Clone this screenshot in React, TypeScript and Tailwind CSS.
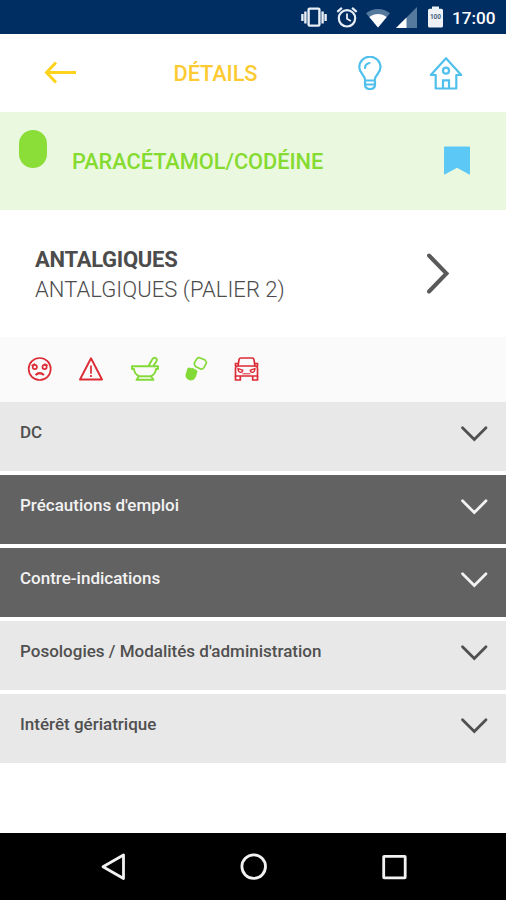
const sections = [
    { title: "DC", dark: false },
    { title: "Précautions d'emploi", dark: true },
    { title: "Contre-indications", dark: true },
    { title: "Posologies / Modalités d'administration", dark: false },
    { title: "Intérêt gériatrique", dark: false },
];

function StatusBar() {
    return (
        <div className="flex h-[34px] items-start justify-end bg-[#002d62] pr-[11px] pt-[6px] text-white">
            <svg className="h-[22px] w-[26px]" viewBox="0 0 26 22" fill="none" stroke="#e8eef5" strokeWidth="2.4">
                <rect x="7.6" y="2.6" width="10.8" height="17" rx="1" />
                <path d="M4.4 5.5v12M1.4 8v7M21.6 5.5v12M24.6 8v7" />
            </svg>
            <svg className="ml-[9px] h-[22px] w-[22px]" viewBox="0 0 22 22" fill="none" stroke="#e8eef5" strokeWidth="2.2">
                <circle cx="11" cy="12.3" r="8.2" />
                <path d="M11 7.5v5.3l3.8 2.3" strokeWidth="1.8" />
                <path d="M1.3 5.8l4.6-4M20.7 5.8l-4.6-4" />
            </svg>
            <svg className="ml-[8px] h-[22px] w-[24px]" viewBox="0 0 24 22">
                <path d="M0 7.3C7 1.6 17 1.6 24 7.3L12 21.5Z" fill="#56799e" />
                <path d="M3.3 11.1C8.5 7 15.5 7 20.7 11.1L12 21.5Z" fill="#fff" />
            </svg>
            <svg className="ml-[6px] h-[22px] w-[21px]" viewBox="0 0 21 22">
                <path d="M21 1v21H0Z" fill="#56799e" />
                <path d="M10.5 11.5V22H0Z" fill="#fff" />
            </svg>
            <svg className="ml-[11px] h-[22px] w-[15px]" viewBox="0 0 15 22">
                <path d="M4 0.5h7v2.3h2.4q1.6 0 1.6 1.5v15.8q0 1.5-1.6 1.5H1.6Q0 21.6 0 20.1v-15.8q0-1.5 1.6-1.5H4Z" fill="#eef1f5" />
                <text x="7.5" y="13.3" textAnchor="middle" fontSize="6.5" fontWeight="700" fill="#48617f">100</text>
            </svg>
            <span className="ml-[9px] w-[43px] whitespace-nowrap text-[17.2px] font-medium leading-[24px]">17:00</span>
        </div>
    );
}

function Header() {
    return (
        <div className="flex h-[78px] items-start bg-white pl-[44px]">
            <svg className="mt-[27px] h-[23px] w-[33px]" viewBox="0 0 33 23" fill="none" stroke="#fdd31b" strokeWidth="3">
                <path d="M12 1.5L2.5 11.5L12 21.5M2.5 11.5H32" />
            </svg>
            <h1 className="ml-[96px] mt-[27px] w-[86px] whitespace-nowrap pl-[0.5px] text-[21.8px] font-medium leading-[26px] tracking-[-0.1px] text-[#fccb34]">
                DÉTAILS
            </h1>
            <svg className="ml-[99px] mt-[22px] h-[34px] w-[24px]" viewBox="0 0 24 34" fill="none" stroke="#4fc0ec" strokeWidth="2.2">
                <path d="M7.3 24.5C7.3 19 1.3 17.8 1.3 11.3A10.6 10.6 0 0 1 22.5 11.3C22.5 17.8 16.5 19 16.5 24.5Z" />
                <path d="M7 24.5V29M17 24.5V29M7 28.5Q7 33 12 33T17 28.5Z" />
                <path d="M7 12Q7.2 7.7 11.5 7" strokeLinecap="round" />
            </svg>
            <svg className="ml-[47px] mt-[22px] h-[34px] w-[34px]" viewBox="0 0 34 34" fill="none" stroke="#4fc0ec" strokeWidth="2.2">
                <path d="M6.7 19H1.8L17 2.2L32.2 19H27.3V32.5H6.7Z" strokeLinejoin="round" />
                <circle cx="17" cy="14.7" r="3" />
                <path d="M14 32V24.3H20V32" />
            </svg>
        </div>
    );
}

function DrugBanner() {
    return (
        <div className="flex h-[98px] items-start bg-[#ebf8e0] pl-[19px]">
            <div className="mt-[18px] h-[38px] w-[28px] rounded-full bg-[#8bdd37]" />
            <h2 className="ml-[25px] mt-[37px] w-[255px] whitespace-nowrap text-[21.8px] font-medium leading-[26px] tracking-[-0.06px] text-[#86db31]">
                PARACÉTAMOL/CODÉINE
            </h2>
            <svg className="ml-[117px] mt-[34px] h-[29px] w-[26px]" viewBox="0 0 26 29">
                <path d="M1 0.5H25Q26 0.5 26 1.5V27.5Q26 29 24.8 28.3L13 21.8L1.2 28.3Q0 29 0 27.5V1.5Q0 0.5 1 0.5Z" fill="#5bc8f5" />
            </svg>
        </div>
    );
}

function Category() {
    return (
        <div className="flex h-[127px] items-start bg-white pl-[35px]">
            <div className="mt-[35px] w-[392px] whitespace-nowrap text-[22px] leading-[29.5px] text-[#4c4c4c]">
                <p className="font-bold tracking-[-0.28px]">ANTALGIQUES</p>
                <p className="font-light tracking-[0.05px]">ANTALGIQUES (PALIER 2)</p>
            </div>
            <svg className="mt-[43px] h-[41px] w-[24px]" viewBox="0 0 24 41" fill="none" stroke="#595959" strokeWidth="4">
                <path d="M2 2.5L19.5 20.5L2 38.5" strokeLinecap="round" />
            </svg>
        </div>
    );
}

function WarningIcons() {
    return (
        <div className="flex h-[64.5px] items-start bg-[#fafafa] pl-[27px] pt-[19px]">
            <svg className="h-[26px] w-[26px]" viewBox="0 0 26 26" fill="none" stroke="#dc2b35" strokeWidth="1.7">
                <circle cx="12.7" cy="13" r="11" />
                <circle cx="7.8" cy="11" r="2.1" />
                <circle cx="17.6" cy="11" r="2.1" />
                <path d="M4.3 9.5L8 7.5M21.2 9.5L17.5 7.5" strokeWidth="1" />
                <path d="M8.5 19Q12.7 15.3 17 19" strokeWidth="2" />
            </svg>
            <svg className="ml-[26px] h-[26px] w-[24px]" viewBox="0 0 24 26" fill="none" stroke="#dc2b35" strokeWidth="1.9">
                <path d="M12 2.3L23 23.5H1Z" strokeLinejoin="round" />
                <path d="M12 9.5V17.8M12 19V21" strokeWidth="1.7" />
            </svg>
            <svg className="ml-[28px] h-[26px] w-[28px]" viewBox="0 0 28 26" fill="none" stroke="#83d936" strokeWidth="1.9">
                <path d="M1 10.3H27V13H25Q24.5 18 20 20.3L22.5 23.7H5.5L8 20.3Q3.5 18 3 13H1Z" strokeLinejoin="round" />
                <path d="M8 20.3H20" />
                <path d="M17.5 10L21.5 3Q23 1 25 2.3Q26.5 3.5 25.3 5.5L22.3 10" />
            </svg>
            <svg className="ml-[26px] h-[26px] w-[23px]" viewBox="0 0 23 26" fill="none" stroke="#83d936" strokeWidth="1.6">
                <path d="M0.6 18.5L2.5 12.2Q4.5 10.7 6 12.3Q8.2 11.2 9.6 13.2Q11.8 13.2 12.5 15.5L11 20.5Q8.8 25.2 4.5 24.3Q0 22.8 0.6 18.5Z" fill="#83d936" stroke="none" />
                <path d="M9.5 6.5L12 2.5Q13.5 1.2 15.3 1.9L20 4Q21.8 5.5 21.2 7.5L19 11.5Q17.5 13.5 15.5 13L11 10.8Q8.8 9 9.5 6.5Z" />
            </svg>
            <svg className="ml-[26px] h-[26px] w-[25px]" viewBox="0 0 25 26" fill="none" stroke="#dc2b35" strokeWidth="1.7">
                <path d="M4 10.5L5 3.7Q5.3 2 7 2H18Q19.7 2 20 3.7L21 10.5" />
                <path d="M3.5 10H21.5Q23.5 10 23.5 12.5V20H1.5V12.5Q1.5 10 3.5 10Z" />
                <path d="M1.5 20V24H6.3V20M18.7 20V24H23.5V20M1.5 10.5V7.5H4.5M23.5 10.5V7.5H20.5" />
                <path d="M4 12.5L8.8 14.3Q8.5 16.5 6.5 16.3Q4 15.8 4 12.5ZM21 12.5L16.2 14.3Q16.5 16.5 18.5 16.3Q21 15.8 21 12.5Z" strokeWidth="1.3" />
                <path d="M8.5 17.8H16.5" strokeWidth="1" />
            </svg>
        </div>
    );
}

export default function App() {
    return (
        <div className="flex h-[900px] w-[506px] flex-col overflow-hidden bg-white font-['Roboto',sans-serif]">
            <StatusBar />
            <Header />
            <DrugBanner />
            <Category />
            <WarningIcons />

            <div className="flex flex-col gap-[4px]">
                {sections.map(({ title, dark }) => (
                    <div
                        key={title}
                        className={`flex h-[69px] items-start justify-between pl-[20px] pr-[18px] ${
                            dark ? "bg-[#626262] text-[#f2f2f2]" : "bg-[#e8e8e8] text-[#505050]"
                        }`}
                    >
                        <span className="mt-[20px] whitespace-nowrap text-[17px] font-medium leading-[20px]">
                            {title}
                        </span>
                        <svg className="mt-[23.5px] h-[17px] w-[28px]" viewBox="0 0 28 17" fill="none" stroke="currentColor" strokeWidth="2.8">
                            <path d="M2.5 2.8L14.3 14.6L26 2.8" strokeLinecap="round" />
                        </svg>
                    </div>
                ))}
            </div>

            {/* Android navigation */}
            <div className="mt-auto flex h-[67px] items-start bg-black pl-[101px] pt-[20px]">
                <svg className="h-[28px] w-[25px]" viewBox="0 0 25 28" fill="none" stroke="#f2f2f2" strokeWidth="2.8">
                    <path d="M22.5 2V25.5L2 13.7Z" strokeLinejoin="round" />
                </svg>
                <svg className="ml-[114px] h-[28px] w-[28px]" viewBox="0 0 28 28" fill="none" stroke="#f2f2f2" strokeWidth="2.8">
                    <circle cx="13.7" cy="13.6" r="11.8" />
                </svg>
                <svg className="ml-[114px] h-[28px] w-[26px]" viewBox="0 0 26 28" fill="none" stroke="#f2f2f2" strokeWidth="2.8">
                    <rect x="1.7" y="3.3" width="21.5" height="21.5" rx="0.5" />
                </svg>
            </div>
        </div>
    );
}
